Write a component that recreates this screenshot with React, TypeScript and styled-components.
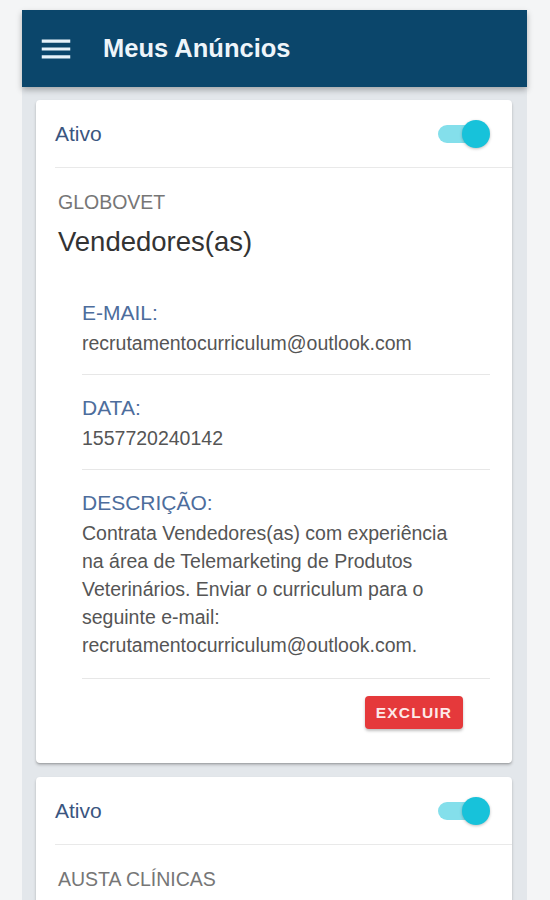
import React from 'react';
import styled, { createGlobalStyle } from 'styled-components';

const GlobalStyle = createGlobalStyle`
  body {
    margin: 0;
    background: #f4f5f6;
    font-family: 'Liberation Sans', Arial, sans-serif;
  }
`;

type Field = {
  label: string;
  value: string;
  multiline?: boolean;
};

type Ad = {
  company: string;
  title?: string;
  fields?: Field[];
};

const ADS: Ad[] = [
  {
    company: 'GLOBOVET',
    title: 'Vendedores(as)',
    fields: [
      { label: 'E-MAIL:', value: 'recrutamentocurriculum@outlook.com' },
      { label: 'DATA:', value: '1557720240142' },
      {
        label: 'DESCRIÇÃO:',
        value:
          'Contrata Vendedores(as) com experiência na área de Telemarketing de Produtos Veterinários. Enviar o curriculum para o seguinte e-mail: recrutamentocurriculum@outlook.com.',
        multiline: true,
      },
    ],
  },
  { company: 'AUSTA CLÍNICAS' },
];

const Frame = styled.div`
  margin: 10px 0 0 22px;
  width: 505px;
  min-height: 890px;
  background: #e3e7eb;
`;

const AppBar = styled.header`
  position: relative;
  z-index: 1;
  height: 77px;
  display: flex;
  align-items: center;
  gap: 28px;
  padding-left: 15px;
  background: #0b466b;
  box-shadow: 0 3px 6px rgba(0, 0, 0, 0.28);
`;

const MenuIcon = styled.svg`
  width: 38px;
  height: 38px;
  fill: #e6f2fa;
  flex-shrink: 0;
`;

const Title = styled.h1`
  margin: 0;
  font-size: 25.5px;
  font-weight: 700;
  color: #eef5fa;
`;

const Content = styled.main`
  display: flex;
  flex-direction: column;
  gap: 14px;
  padding: 13px 15px 0 14px;
`;

const Card = styled.section`
  background: #fff;
  border-radius: 4px;
  box-shadow: 0 2px 3px rgba(0, 0, 0, 0.22), 0 1px 1px rgba(0, 0, 0, 0.1);
`;

const StatusRow = styled.div`
  height: 67px;
  display: flex;
  align-items: center;
  justify-content: space-between;
  padding: 0 22px 0 19px;
`;

const StatusLabel = styled.span`
  font-size: 21px;
  color: #3a5580;
`;

const Switch = styled.span`
  display: inline-flex;
  align-items: center;
`;

const Track = styled.span`
  width: 44px;
  height: 18px;
  border-radius: 9px;
  background: #84dfeb;
`;

const Thumb = styled.span`
  width: 28px;
  height: 28px;
  margin-left: -20px;
  border-radius: 50%;
  background: #17c2da;
  box-shadow: 0 1px 3px rgba(0, 0, 0, 0.25);
`;

const Divider = styled.hr`
  margin: 0 0 0 19px;
  border: none;
  border-top: 1px solid #e9e9e9;
`;

const Body = styled.div<{ $open?: boolean }>`
  padding: 22px 22px ${(p) => (p.$open ? '48px' : '0')} 22px;
`;

const Company = styled.div`
  font-size: 19.5px;
  line-height: 24px;
  color: #767676;
`;

const AdTitle = styled.h2`
  margin: 12px 0 0;
  font-size: 27.5px;
  line-height: 32px;
  font-weight: 400;
  color: #333;
`;

const FieldList = styled.ul`
  list-style: none;
  margin: 22px 0 0;
  padding: 0 0 0 24px;
`;

const FieldItem = styled.li`
  padding: 20px 0 19px;
  border-bottom: 1px solid #e7e7e7;
`;

const FieldLabel = styled.div`
  font-size: 21px;
  line-height: 26px;
  color: #4d6d9c;
  margin-bottom: 5px;
`;

const FieldValue = styled.div<{ $multiline?: boolean }>`
  font-size: 19.5px;
  line-height: ${(p) => (p.$multiline ? '28px' : '24px')};
  margin-top: ${(p) => (p.$multiline ? '-2px' : '0')};
  max-width: ${(p) => (p.$multiline ? '380px' : 'none')};
  color: #555;
`;

const Actions = styled.div`
  display: flex;
  justify-content: flex-end;
  padding: 17px 27px 34px 0;
`;

const DeleteButton = styled.button`
  width: 98px;
  height: 33px;
  padding: 0;
  border: none;
  border-radius: 4px;
  background: #e5393b;
  color: #fde9e9;
  font-family: 'Liberation Sans', Arial, sans-serif;
  font-size: 15.5px;
  font-weight: 700;
  letter-spacing: 1.2px;
  box-shadow: 0 2px 3px rgba(0, 0, 0, 0.25);
  cursor: pointer;
`;

const AdCard = ({ ad }: { ad: Ad }) => (
  <Card>
    <StatusRow>
      <StatusLabel>Ativo</StatusLabel>
      <Switch>
        <Track />
        <Thumb />
      </Switch>
    </StatusRow>
    <Divider />
    <Body $open={!ad.fields}>
      <Company>{ad.company}</Company>
      {ad.title && <AdTitle>{ad.title}</AdTitle>}
      {ad.fields && (
        <>
          <FieldList>
            {ad.fields.map((field) => (
              <FieldItem key={field.label}>
                <FieldLabel>{field.label}</FieldLabel>
                <FieldValue $multiline={field.multiline}>{field.value}</FieldValue>
              </FieldItem>
            ))}
          </FieldList>
          <Actions>
            <DeleteButton>EXCLUIR</DeleteButton>
          </Actions>
        </>
      )}
    </Body>
  </Card>
);

export default function App() {
  return (
    <>
      <GlobalStyle />
      <Frame>
        <AppBar>
          <MenuIcon viewBox="0 0 24 24">
            <path d="M3 18h18v-2H3v2zm0-5h18v-2H3v2zm0-7v2h18V6H3z" />
          </MenuIcon>
          <Title>Meus Anúncios</Title>
        </AppBar>
        <Content>
          {ADS.map((ad) => (
            <AdCard key={ad.company} ad={ad} />
          ))}
        </Content>
      </Frame>
    </>
  );
}
